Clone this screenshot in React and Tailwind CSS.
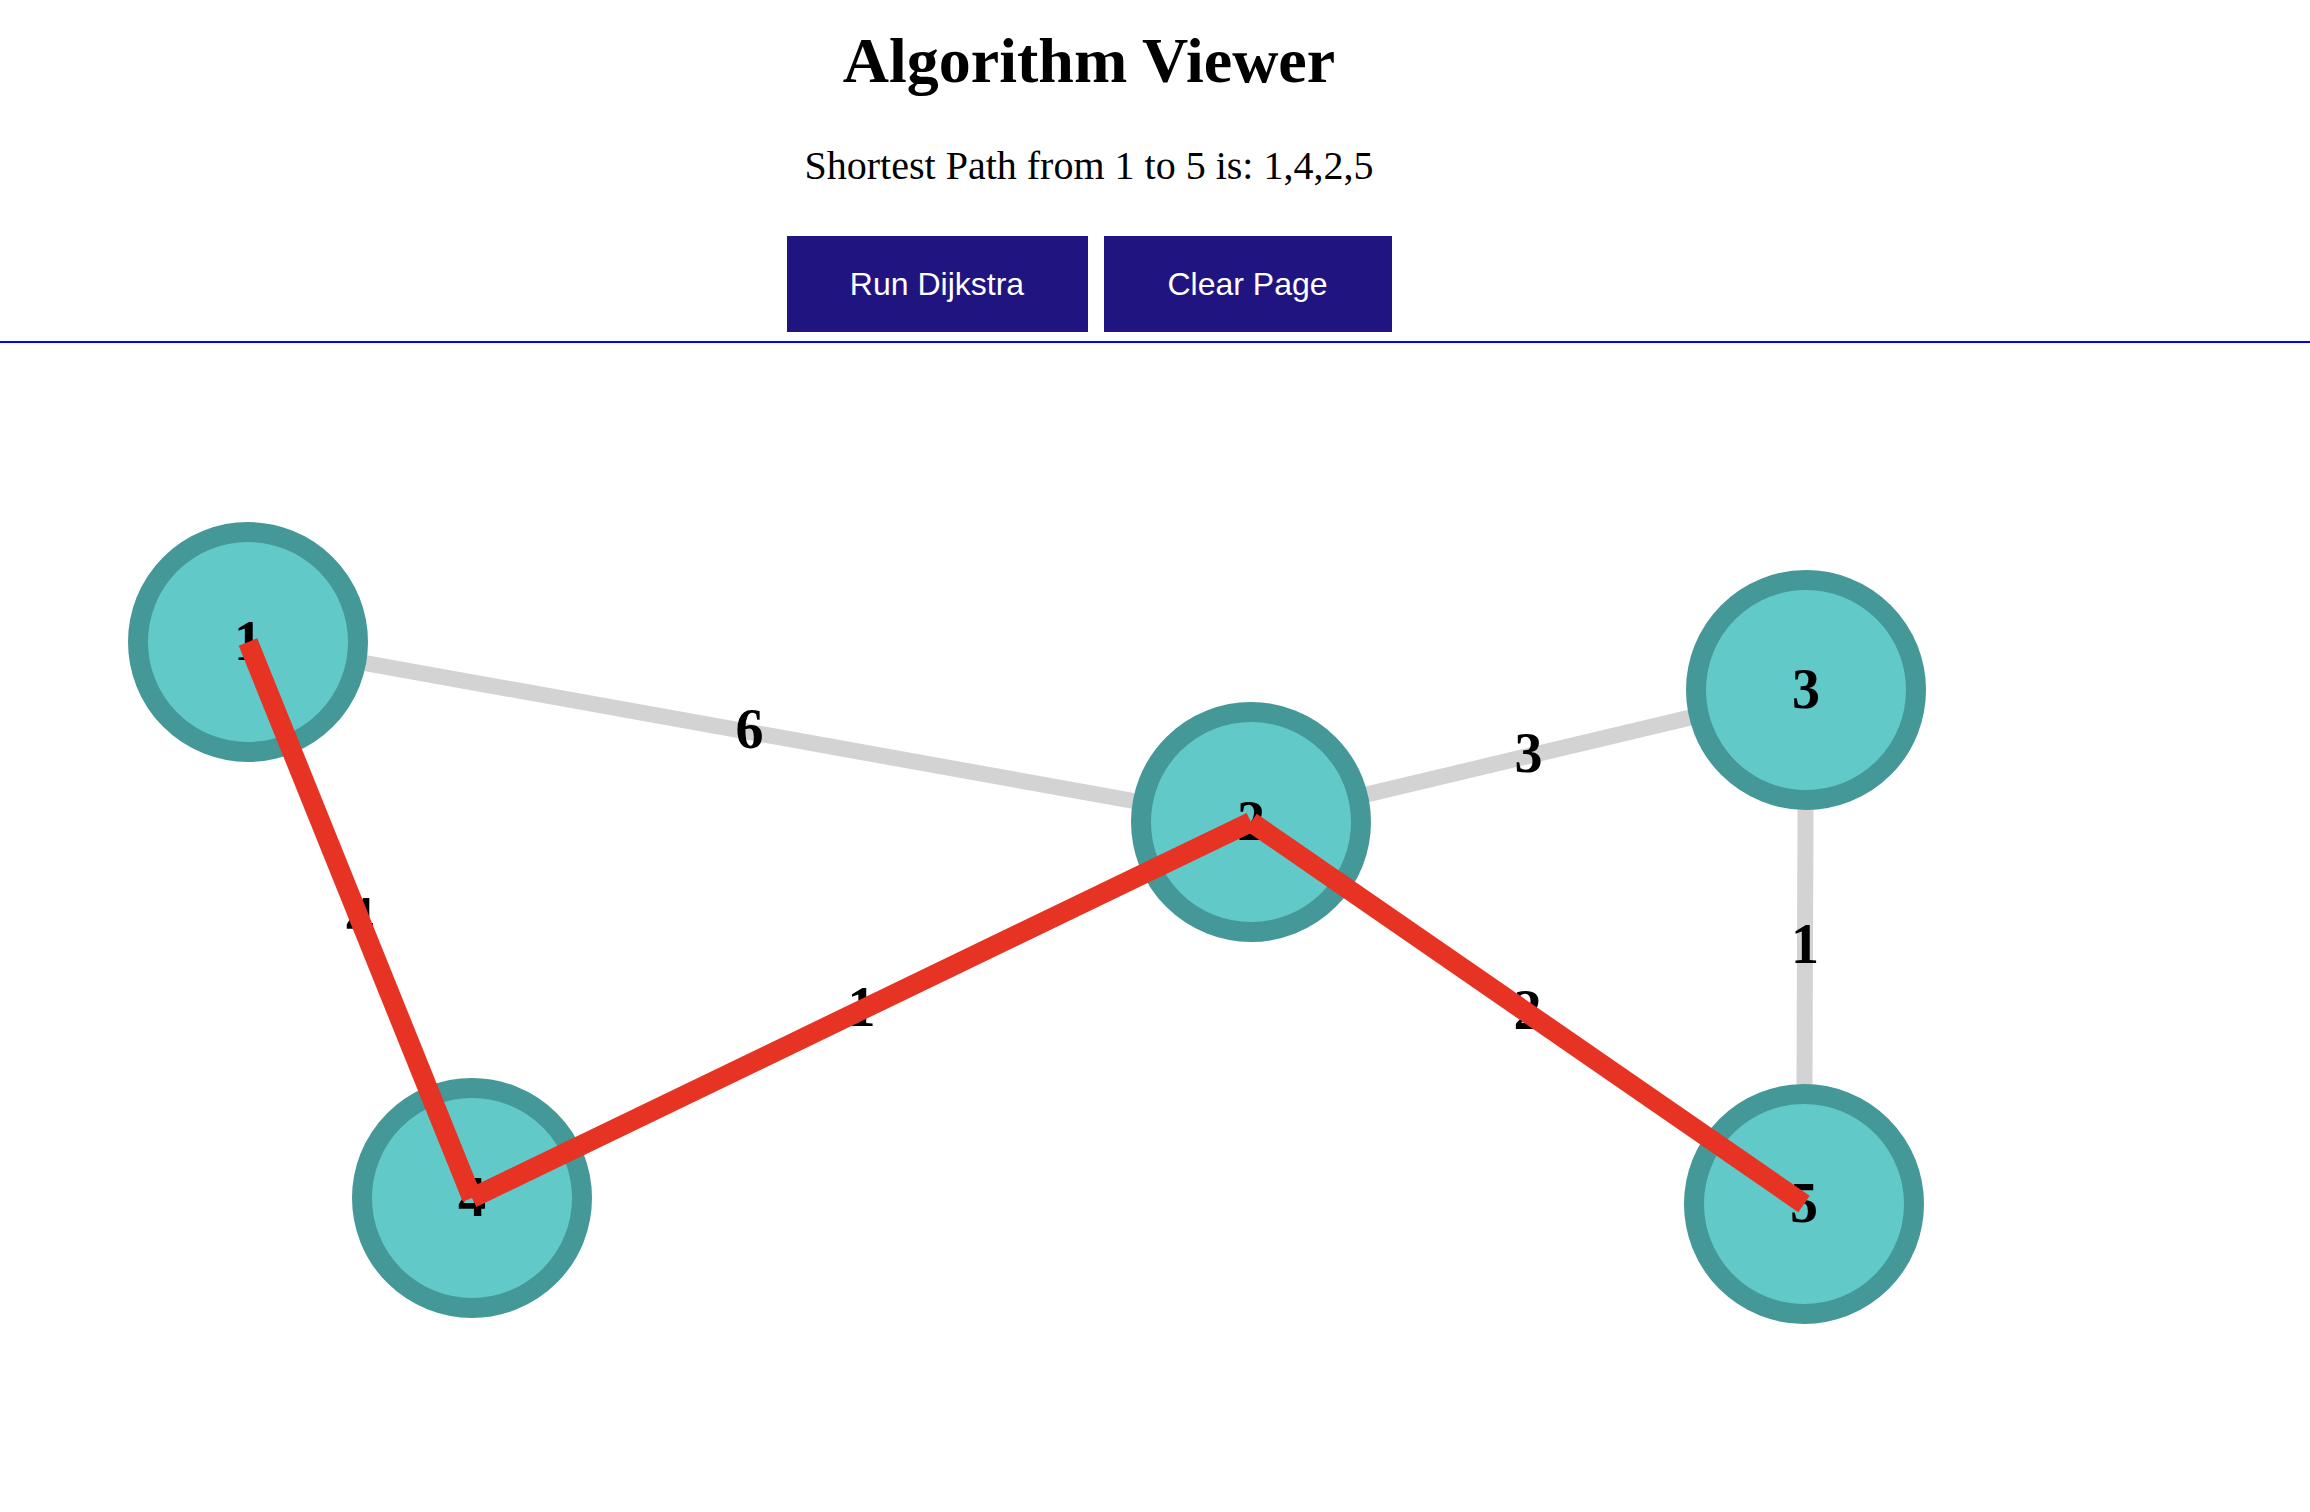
import React from "react";

const nodes = [
  { id: 1, x: 248, y: 642 },
  { id: 2, x: 1251, y: 822 },
  { id: 3, x: 1806, y: 690 },
  { id: 4, x: 472, y: 1198 },
  { id: 5, x: 1804, y: 1204 },
];

const edges = [
  { a: 1, b: 2, w: 6, red: false },
  { a: 2, b: 3, w: 3, red: false },
  { a: 3, b: 5, w: 1, red: false },
  { a: 1, b: 4, w: 4, red: true },
  { a: 4, b: 2, w: 1, red: true },
  { a: 2, b: 5, w: 2, red: true },
];

const pos = (id) => nodes.find((n) => n.id === id);

export default function App() {
  const font = { fontFamily: '"Liberation Serif", "Times New Roman", serif' };
  return (
    <div className="bg-white w-[2310px] h-[1512px] overflow-hidden">
      <div className="w-[2178px] flex flex-col items-center">
        <h1 className="mt-[24px] text-[64px] leading-[74px] font-bold text-black font-['Liberation_Serif',serif]">
          Algorithm Viewer
        </h1>
        <p className="mt-[45px] text-[40px] leading-[46px] text-black font-['Liberation_Serif',serif]">
          Shortest Path from 1 to 5 is: 1,4,2,5
        </p>
        <div className="mt-[47px] flex gap-[16px]">
          <button className="w-[301px] h-[96px] bg-[#201580] text-white text-[32px] leading-[37px] font-['Liberation_Sans',Arial,sans-serif]">
            Run Dijkstra
          </button>
          <button className="w-[288px] h-[96px] bg-[#201580] text-white text-[32px] leading-[37px] font-['Liberation_Sans',Arial,sans-serif]">
            Clear Page
          </button>
        </div>
      </div>
      <div className="mt-[9px] h-[2px] w-full bg-[#0000ff]" />
      <svg
        width="2310"
        height="1169"
        viewBox="0 343 2310 1169"
        className="block"
        style={font}
      >
        {edges
          .filter((e) => !e.red)
          .map((e, i) => {
            const p = pos(e.a);
            const q = pos(e.b);
            return (
              <line
                key={"g" + i}
                x1={p.x}
                y1={p.y}
                x2={q.x}
                y2={q.y}
                stroke="#d3d3d3"
                strokeWidth="16"
              />
            );
          })}
        {nodes.map((n) => (
          <circle
            key={"c" + n.id}
            cx={n.x}
            cy={n.y}
            r="110"
            fill="#62c9c9"
            stroke="#459898"
            strokeWidth="20"
          />
        ))}
        {nodes.map((n) => (
          <text
            key={"t" + n.id}
            x={n.x}
            y={n.y + 18}
            textAnchor="middle"
            fontSize="56"
            fontWeight="bold"
            fill="#000"
          >
            {n.id}
          </text>
        ))}
        {edges.map((e, i) => {
          const p = pos(e.a);
          const q = pos(e.b);
          return (
            <text
              key={"w" + i}
              x={(p.x + q.x) / 2}
              y={(p.y + q.y) / 2 + 16}
              textAnchor="middle"
              fontSize="56"
              fontWeight="bold"
              fill="#000"
            >
              {e.w}
            </text>
          );
        })}
        {edges
          .filter((e) => e.red)
          .map((e, i) => {
            const p = pos(e.a);
            const q = pos(e.b);
            return (
              <line
                key={"r" + i}
                x1={p.x}
                y1={p.y}
                x2={q.x}
                y2={q.y}
                stroke="#e63323"
                strokeWidth="20"
              />
            );
          })}
      </svg>
    </div>
  );
}
